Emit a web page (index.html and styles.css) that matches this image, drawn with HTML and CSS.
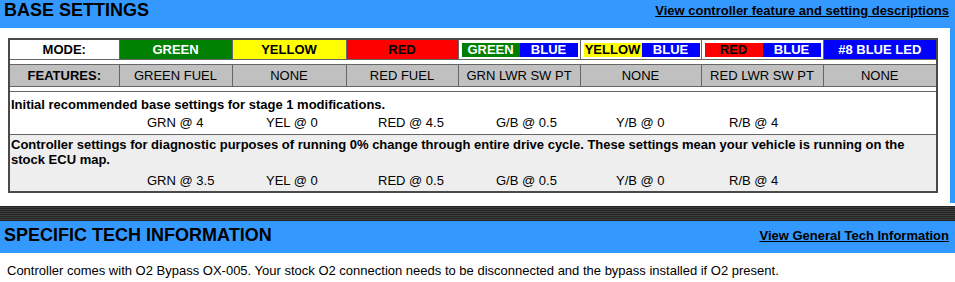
FILE: index.html
```html
<!DOCTYPE html>
<html lang="en">
<head>
<meta charset="utf-8">
<title>Base Settings</title>
<link rel="stylesheet" href="styles.css">
</head>
<body>
<div class="page">
  <section class="section section--base">
    <header class="bar bar--top">
      <h2 class="bar-title">BASE SETTINGS</h2>
      <a class="bar-link" href="#">View controller feature and setting descriptions</a>
    </header>
    <div class="panel">
      <table class="settings">
        <colgroup>
          <col class="w110"><col class="w113"><col class="w114"><col class="w112">
          <col class="w122"><col class="w121"><col class="w122"><col class="w114">
        </colgroup>
        <tbody>
          <tr class="row-mode">
            <td class="label">MODE:</td>
            <td class="c-green">GREEN</td>
            <td class="c-yellow">YELLOW</td>
            <td class="c-red">RED</td>
            <td class="combo"><div class="split"><span class="half c-green">GREEN</span><span class="half c-blue">BLUE</span></div></td>
            <td class="combo"><div class="split"><span class="half c-yellow">YELLOW</span><span class="half c-blue">BLUE</span></div></td>
            <td class="combo"><div class="split"><span class="half c-red">RED</span><span class="half c-blue">BLUE</span></div></td>
            <td class="c-blue">#8 BLUE LED</td>
          </tr>
          <tr class="spacer"><td colspan="8"></td></tr>
          <tr class="row-features">
            <td class="label">FEATURES:</td>
            <td>GREEN FUEL</td>
            <td>NONE</td>
            <td>RED FUEL</td>
            <td>GRN LWR SW PT</td>
            <td>NONE</td>
            <td>RED LWR SW PT</td>
            <td>NONE</td>
          </tr>
          <tr class="spacer"><td colspan="8"></td></tr>
          <tr class="row-info">
            <td colspan="8" class="info info--first">
              <div class="info-title">Initial recommended base settings for stage 1 modifications.</div>
              <div class="values">
                <span>GRN @ 4</span><span>YEL @ 0</span><span>RED @ 4.5</span>
                <span>G/B @ 0.5</span><span>Y/B @ 0</span><span>R/B @ 4</span>
              </div>
            </td>
          </tr>
          <tr class="row-info row-info--alt">
            <td colspan="8" class="info info--second">
              <div class="info-title">Controller settings for diagnostic purposes of running 0% change through entire drive cycle. These settings mean your vehicle is running on the stock ECU map.</div>
              <div class="values values--spaced">
                <span>GRN @ 3.5</span><span>YEL @ 0</span><span>RED @ 0.5</span>
                <span>G/B @ 0.5</span><span>Y/B @ 0</span><span>R/B @ 4</span>
              </div>
            </td>
          </tr>
        </tbody>
      </table>
    </div>
  </section>

  <div class="divider"></div>

  <section class="section">
    <header class="bar">
      <h2 class="bar-title">SPECIFIC TECH INFORMATION</h2>
      <a class="bar-link" href="#">View General Tech Information</a>
    </header>
    <div class="tech-body">Controller comes with O2 Bypass OX-005. Your stock O2 connection needs to be disconnected and the bypass installed if O2 present.</div>
  </section>
</div>
</body>
</html>
```
FILE: styles.css
```css
html, body {
  margin: 0;
  padding: 0;
  background: #ffffff;
}

body {
  font-family: "Liberation Sans", Arial, sans-serif;
  font-size: 13px;
  color: #000000;
}

/* ---------- section bars ---------- */
.section--base {
  background: #3399ff;
}

.bar {
  display: flex;
  justify-content: space-between;
  align-items: center;
  background: #3399ff;
  padding: 4px 6px 7px 4px;
}

.bar--top {
  padding-top: 0;
}

.bar-title {
  margin: 0;
  font-size: 18px;
  font-weight: bold;
  line-height: normal;
  color: #000000;
}

.bar-link {
  color: #000000;
  font-weight: bold;
  font-size: 13px;
  line-height: 15px;
  text-decoration: underline;
}

/* ---------- white panel holding the settings table ---------- */
.panel {
  background: #ffffff;
  margin: 0 5px 3px 0;
  padding: 10px 14px 10px 8px;
}

.settings {
  border-collapse: collapse;
  table-layout: fixed;
  width: 928px;
  border: 2px solid #4a4a4a;
}

.w110 { width: 110px; }
.w112 { width: 112px; }
.w113 { width: 113px; }
.w114 { width: 114px; }
.w121 { width: 121px; }
.w122 { width: 122px; }

.settings td {
  border: 1px solid #666666;
  padding: 2px;
  text-align: center;
  line-height: 15px;
  white-space: nowrap;
  overflow: hidden;
}

.label {
  font-weight: bold;
}

.row-mode td {
  background: #ffffff;
  font-weight: bold;
}

.c-green  { background: #008000 !important; color: #ffffff; }
.c-yellow { background: #ffff00 !important; color: #000000; }
.c-red    { background: #ff0000 !important; color: #000000; }
.c-blue   { background: #0000ff !important; color: #ffffff; }

.settings td.combo {
  padding: 3px 0 2px 3px;
}

.split {
  display: flex;
}

.half {
  width: 58px;
  line-height: 14px;
  text-align: center;
}

.spacer td {
  height: 4px;
  padding: 0;
  font-size: 0;
  line-height: 0;
  background: #ffffff;
}

.row-features td {
  background: #c0c0c0;
  padding: 3px 2px;
}

/* ---------- recommended settings rows ---------- */
.settings td.info {
  text-align: left;
  white-space: normal;
  padding: 5px 1px 4px;
}

.settings td.info--second {
  padding: 2px 1px 3px;
}

.row-info--alt td {
  background: #eeeeee;
}

.info-title {
  font-weight: bold;
}

.values {
  display: grid;
  grid-template-columns: 119px 112px 118px 120px 113px auto;
  padding-left: 136px;
  margin-top: 3px;
}

.values--spaced {
  margin-top: 6px;
}

/* ---------- striped divider ---------- */
.divider {
  height: 15px;
  background: repeating-linear-gradient(
    to bottom,
    #252525 0,
    #252525 1px,
    #3c3c3c 1px,
    #3c3c3c 2px
  );
}

.tech-body {
  padding: 10px 7px;
  line-height: 15px;
}
```
